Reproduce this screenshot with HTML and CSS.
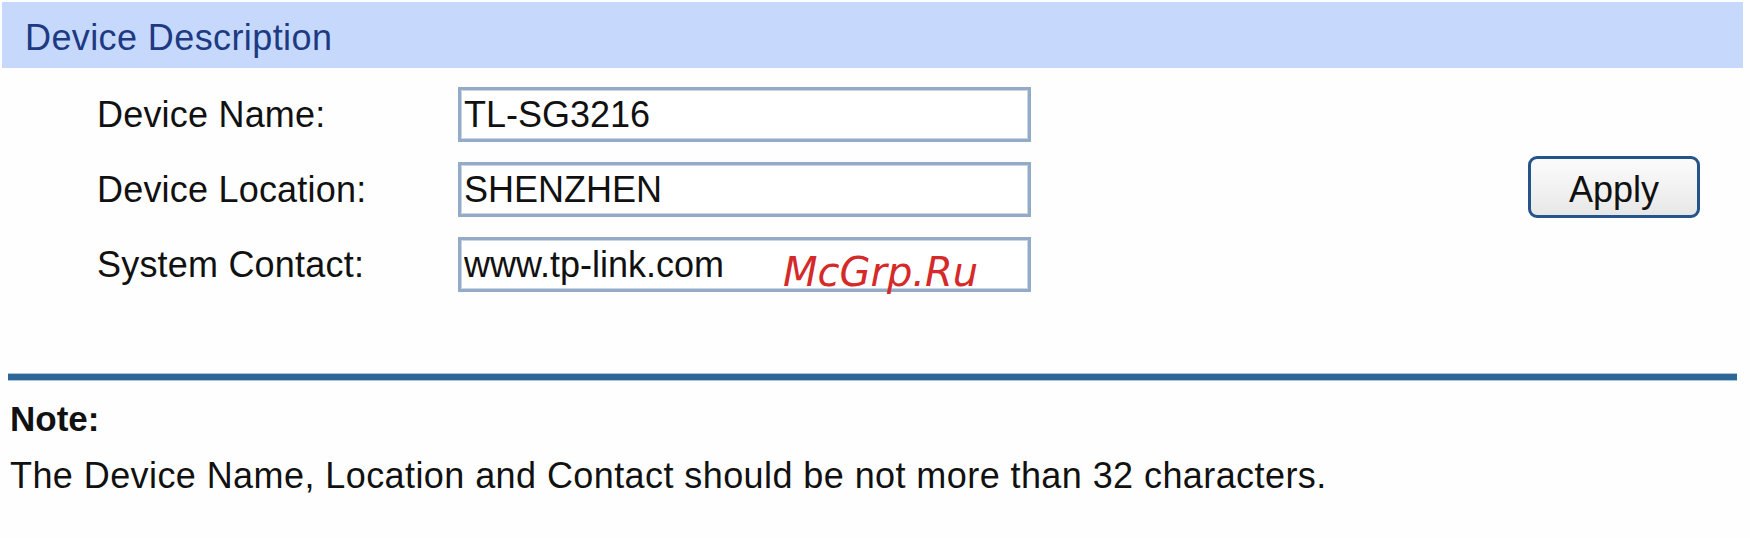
FILE: index.html
```html
<!DOCTYPE html>
<html lang="en">
<head>
<meta charset="utf-8">
<title>Device Description</title>
<link rel="stylesheet" href="styles.css">
</head>
<body>
<div class="page">
  <div class="panel-header">Device Description</div>
  <div class="form">
    <div class="fields">
      <div class="row">
        <label class="label" for="name">Device Name:</label>
        <input class="field" id="name" type="text" value="TL-SG3216">
      </div>
      <div class="row">
        <label class="label" for="loc">Device Location:</label>
        <input class="field" id="loc" type="text" value="SHENZHEN">
      </div>
      <div class="row">
        <label class="label" for="contact">System Contact:</label>
        <input class="field" id="contact" type="text" value="www.tp-link.com">
      </div>
    </div>
    <button class="apply" type="button">Apply</button>
  </div>
  <div class="separator"></div>
  <div class="note-title">Note:</div>
  <div class="note-text">The Device Name, Location and Contact should be not more than 32 characters.</div>
  <div class="watermark">McGrp.Ru</div>
</div>
</body>
</html>
```
FILE: styles.css
```css
html, body {
  margin: 0;
  padding: 0;
  background: #fefefe;
}

.page {
  position: relative;
  width: 1750px;
  height: 538px;
  font-family: "Liberation Sans", Arial, sans-serif;
  font-size: 36px;
  color: #111;
}

.panel-header {
  margin: 2px 7px 0 2px;
  height: 61px;
  padding: 5px 0 0 23px;
  line-height: 61px;
  background: #c6d9fc;
  color: #1d3a82;
  letter-spacing: 0.4px;
}

.form {
  display: flex;
  padding: 19px 50px 0 97px;
}

.fields {
  display: flex;
  flex-direction: column;
  gap: 20px;
}

.row {
  display: flex;
  align-items: center;
  height: 55px;
}

.label {
  width: 361px;
  line-height: normal;
  letter-spacing: 0.2px;
}

.field {
  box-sizing: border-box;
  width: 573px;
  height: 55px;
  margin: 0;
  padding: 0 0 0 3px;
  border: 3px solid #93abc6;
  box-shadow: inset 0 0 0 1px #c9d6e4;
  background: #fff;
  font-family: "Liberation Sans", Arial, sans-serif;
  font-size: 36px;
  color: #111;
  outline: none;
}

.apply {
  box-sizing: border-box;
  margin: 69px 0 0 auto;
  width: 172px;
  height: 62px;
  padding: 6px 0 0 0;
  border: 3px solid #25548b;
  border-radius: 9px;
  background: linear-gradient(#fbfbfb, #eeeeee 70%, #e6e6e6);
  font-family: "Liberation Sans", Arial, sans-serif;
  font-size: 36px;
  color: #111;
  line-height: normal;
}

.separator {
  margin: 81px 13px 0 8px;
  height: 6px;
  background: #2c6797;
  border-top: 1px solid #a9c3da;
  border-bottom: 1px solid #a9c3da;
}

.note-title {
  margin-top: 18px;
  padding-left: 10px;
  font-size: 35px;
  font-weight: bold;
  line-height: 40px;
}

.note-text {
  margin-top: 16px;
  padding-left: 10px;
  line-height: 41px;
  letter-spacing: 0.42px;
}

.watermark {
  position: absolute;
  left: 783px;
  top: 250px;
  font-family: "DejaVu Sans", sans-serif;
  font-style: italic;
  font-size: 40px;
  line-height: 40px;
  color: #d42a2a;
}
```
